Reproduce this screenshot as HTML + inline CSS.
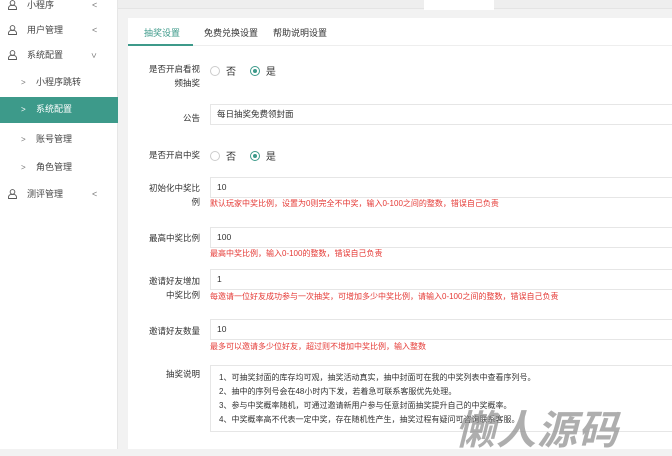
<!DOCTYPE html><html><head><meta charset="utf-8"><style>
*{margin:0;padding:0;box-sizing:border-box}
body{width:672px;height:449px;overflow:hidden;background:#f2f2f2;font-family:"Liberation Sans","Noto Sans CJK SC",sans-serif;font-size:9px;color:#333;position:relative}
.sb{position:absolute;left:0;top:0;width:118px;height:449px;background:#fff;border-right:1px solid #e6e6e6}
.it{position:absolute;left:0;width:118px;height:25px;line-height:25px;color:#444;font-size:9px}
.it .ic{position:absolute;left:8px;top:7px;width:9px;height:10px}
.it .t{position:absolute;left:27px}
.it .ar{position:absolute;left:92px;color:#777}
.sub .t{left:36px}.sub .ar{left:21px;font-size:8px}
.act{background:#3d9a8a;color:#fff}.act .ar{color:#fff}
.topbar{position:absolute;left:118px;top:0;right:0;height:9px;background:#eee;border-bottom:1px solid #e4e4e4}
.card{position:absolute;left:128px;top:18px;width:544px;height:431px;background:#fff}
.tabs{height:28px;border-bottom:1px solid #eee;position:relative}
.tab{position:absolute;top:8px;font-size:9px;color:#333}
.lab{position:absolute;width:72px;text-align:right;font-size:8.5px;color:#333;line-height:14px}
.inp{position:absolute;left:82px;right:0;height:21px;border:1px solid #e6e6e6;border-right:none;padding-left:6px;line-height:19px;font-size:8.5px}
.red{position:absolute;left:82px;color:#e53935;font-size:8px}
.rad{position:absolute;left:82px;font-size:10px}
.rad i{display:inline-block;width:10px;height:10px;border:1px solid #ccc;border-radius:50%;vertical-align:-1px;margin-right:6px;position:relative}
.rad i.on{border-color:#3d9a8a}.rad i.on:after{content:"";position:absolute;left:2px;top:2px;width:4px;height:4px;border-radius:50%;background:#3d9a8a}
.ta{position:absolute;left:82px;right:0;top:347px;height:67px;border:1px solid #e6e6e6;border-right:none;padding:5px 0 0 8px;font-size:8px;line-height:14px}
.wm{position:absolute;left:455px;top:398px;font-size:40px;font-weight:bold;font-style:italic;color:rgba(140,140,140,.7);letter-spacing:1px}
</style></head><body>
<div class="sb">
<svg width="0" height="0" style="position:absolute"><symbol id="u" viewBox="0 0 10 11"><circle cx="5" cy="3.2" r="2.6" fill="none" stroke="#555"/><path d="M0.6 10.5v-1.5a3 3 0 0 1 3-3h2.8a3 3 0 0 1 3 3v1.5z" fill="none" stroke="#555"/></symbol></svg>
<div class="it" style="top:-7px"><svg class="ic"><use href="#u"/></svg><span class="t">小程序</span><span class="ar">&lt;</span></div>
<div class="it" style="top:18px"><svg class="ic"><use href="#u"/></svg><span class="t">用户管理</span><span class="ar">&lt;</span></div>
<div class="it" style="top:43px"><svg class="ic"><use href="#u"/></svg><span class="t">系统配置</span><span class="ar" style="transform:rotate(-90deg)">&lt;</span></div>
<div class="it sub" style="top:70px"><span class="ar">&gt;</span><span class="t">小程序跳转</span></div>
<div class="it sub act" style="top:97px;height:26px"><span class="ar">&gt;</span><span class="t">系统配置</span></div>
<div class="it sub" style="top:127px"><span class="ar">&gt;</span><span class="t">账号管理</span></div>
<div class="it sub" style="top:155px"><span class="ar">&gt;</span><span class="t">角色管理</span></div>
<div class="it" style="top:182px"><svg class="ic"><use href="#u"/></svg><span class="t">测评管理</span><span class="ar">&lt;</span></div>
</div>
<div class="topbar"><div style="position:absolute;left:306px;top:0;width:70px;height:10px;background:#fff"></div></div>
<div class="card">
<div class="tabs"><span class="tab" style="left:16px;color:#3d9a8a">抽奖设置</span><span class="tab" style="left:76px">免费兑换设置</span><span class="tab" style="left:145px">帮助说明设置</span><div style="position:absolute;left:0;top:26px;width:65px;height:2px;background:#3d9a8a"></div></div>
<div class="lab" style="top:44px">是否开启看视<br>频抽奖</div>
<div class="rad" style="top:45px"><i></i>否 &nbsp;&nbsp;&nbsp;&nbsp;<i class="on"></i>是</div>
<div class="lab" style="top:93px">公告</div><div class="inp" style="top:86px">每日抽奖免费领封面</div>
<div class="lab" style="top:130px">是否开启中奖</div>
<div class="rad" style="top:130px"><i></i>否 &nbsp;&nbsp;&nbsp;&nbsp;<i class="on"></i>是</div>
<div class="lab" style="top:163px">初始化中奖比<br>例</div><div class="inp" style="top:159px">10</div>
<div class="red" style="top:180px">默认玩家中奖比例，设置为0则完全不中奖，输入0-100之间的整数，错误自己负责</div>
<div class="lab" style="top:213px">最高中奖比例</div><div class="inp" style="top:209px">100</div>
<div class="red" style="top:230px">最高中奖比例，输入0-100的整数，错误自己负责</div>
<div class="lab" style="top:256px">邀请好友增加<br>中奖比例</div><div class="inp" style="top:251px">1</div>
<div class="red" style="top:273px">每邀请一位好友成功参与一次抽奖，可增加多少中奖比例，请输入0-100之间的整数，错误自己负责</div>
<div class="lab" style="top:306px">邀请好友数量</div><div class="inp" style="top:301px">10</div>
<div class="red" style="top:323px">最多可以邀请多少位好友，超过则不增加中奖比例，输入整数</div>
<div class="lab" style="top:349px">抽奖说明</div>
<div class="ta">1、可抽奖封面的库存均可观，抽奖活动真实，抽中封面可在我的中奖列表中查看序列号。<br>2、抽中的序列号会在48小时内下发，若着急可联系客服优先处理。<br>3、参与中奖概率随机，可通过邀请新用户参与任意封面抽奖提升自己的中奖概率。<br>4、中奖概率高不代表一定中奖，存在随机性产生，抽奖过程有疑问可咨询联系客服。</div>
</div>
<div class="wm">懒人源码</div>
</body></html>
